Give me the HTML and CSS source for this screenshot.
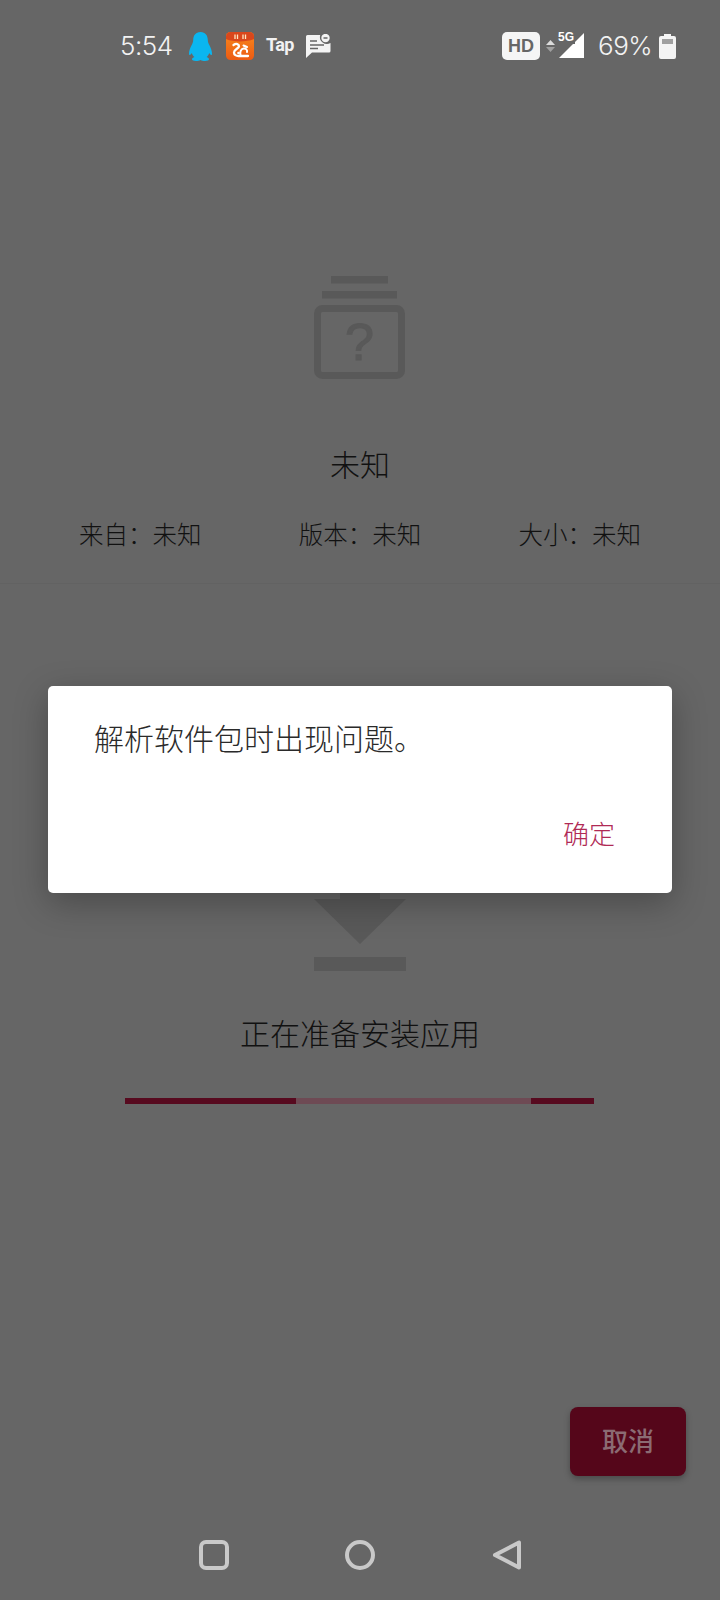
FILE: index.html
```html
<!DOCTYPE html>
<html lang="zh-CN">
<head>
<meta charset="utf-8">
<title>安装应用</title>
<link rel="stylesheet" href="styles.css">
</head>
<body>
<div class="screen">
  <header class="statusbar">
    <div class="status-left">
      <span class="clock">5:54</span>
      <svg class="ic-qq" viewBox="0 0 25 29" width="25" height="29"><path fill="#0ab6f0" d="M12.500 0C7.400 0 5.300 3.800 5.200 8c0 1.900-.6 3.400-1.500 5C2.300 15.600 1 18.800 1 21.800c0 1.100.5 1.500 1.300 1 .6-.4 1.100-1 1.500-1.700.5 1.700 1.400 3 2.600 4-1.400.5-2.400 1.200-2.400 2.200 0 1.200 1.500 1.700 4 1.700 1.900 0 3.300-.4 4.500-1 1.200.6 2.600 1 4.500 1 2.500 0 4-.5 4-1.700 0-1-1-1.700-2.400-2.200 1.200-1 2.100-2.300 2.600-4 .4.700.9 1.300 1.500 1.700.8.500 1.300.1 1.300-1 0-3-1.300-6.200-2.700-8.800-.9-1.600-1.500-3.100-1.500-5C19.700 3.800 17.600 0 12.500 0z"/></svg>
      <svg class="ic-uc" viewBox="0 0 28 28" width="28" height="28">
        <defs><linearGradient id="ucg" x1="0" y1="0" x2="0" y2="1"><stop offset="0" stop-color="#f88a1e"/><stop offset="1" stop-color="#ec5a12"/></linearGradient></defs>
        <rect width="28" height="28" rx="4.500" fill="url(#ucg)"/>
        <path fill="#d9471c" d="M4.500 0h19A4.500 4.500 0 0 1 28 4.500V7c-4 1.800-9 2.400-14 2.400S4 8.800 0 7V4.500A4.500 4.500 0 0 1 4.500 0z"/>
        <path stroke="#ffe6c0" stroke-width="1.300" d="M9 2.500v4.500M11.500 2.500v4.500M17 2.500v4.500M19.500 2.500v4.500"/>
        <path fill="none" stroke="#fff" stroke-width="2.300" stroke-linecap="round" d="M7.500 13c2.800-2 5.500-1 5.500 1.200 0 2.300-5 3-5 6.300 0 2.300 2.300 3.500 4.500 3.500h9.500"/>
        <path fill="none" stroke="#fff" stroke-width="2" stroke-linecap="round" d="M14.500 23c-.8-3 .3-6 3-6.500 2.500-.4 4 1.500 3.500 3.500M17.500 13.500l3.500 1.500"/>
        <circle cx="12.500" cy="21" r="1.300" fill="#fff"/>
      </svg>
      <span class="tap">Tap</span>
      <svg class="ic-msg" viewBox="0 0 25 24" width="25" height="24">
        <path fill="#f4f4f4" d="M1.500 1h12.700a7 7 0 0 0 10.300 8V17a1.500 1.500 0 0 1-1.500 1.500H6L0 24V2.500A1.500 1.500 0 0 1 1.500 1z"/>
        <circle cx="19.500" cy="4" r="4.200" fill="#f4f4f4"/>
        <path stroke="#666" stroke-width="1.500" d="M17.500 4h4M4 7h7M4 11h14M4 14.500h8"/>
      </svg>
    </div>
    <div class="status-right">
      <span class="hd">HD</span>
      <svg class="ic-updown" viewBox="0 0 9 13" width="9" height="13"><path fill="#dcdcdc" d="M4.500 0 9 5H0z"/><path fill="#a0a0a0" d="M0 7h9l-4.500 5z"/></svg>
      <span class="signal">
        <svg viewBox="0 0 25 25" width="25" height="25"><path fill="#fff" d="M25 0v25H0z"/></svg>
        <span class="five-g">5G</span>
      </span>
      <span class="percent">69%</span>
      <svg class="ic-batt" viewBox="0 0 17 25" width="17" height="25"><path fill="#f4f4f4" d="M5 0h7v2h3a2 2 0 0 1 2 2v19a2 2 0 0 1-2 2H2a2 2 0 0 1-2-2V4a2 2 0 0 1 2-2h3z"/><rect x="3" y="5" width="11" height="5" fill="#a0a0a0"/></svg>
    </div>
  </header>

  <section class="app-info">
    <svg class="ic-unknown" viewBox="0 0 92 103" width="92" height="103">
      <rect x="17" y="0" width="57" height="7.500" fill="#595959"/>
      <rect x="8" y="15" width="75" height="7.500" fill="#595959"/>
      <rect x="3.500" y="32.500" width="84" height="67" rx="5" fill="none" stroke="#595959" stroke-width="7"/>
      <text class="qmark" x="45.500" y="84" text-anchor="middle">?</text>
    </svg>
    <h1 class="app-name">未知</h1>
    <div class="meta">
      <span>来自&#xFF1A;未知</span>
      <span>版本&#xFF1A;未知</span>
      <span>大小&#xFF1A;未知</span>
    </div>
  </section>

  <section class="progress-area">
    <svg class="ic-download" viewBox="0 0 92 92" width="92" height="92">
      <path fill="#595959" d="M26 0h40v20h26L46 65 0 20h26z"/>
      <rect x="0" y="78" width="92" height="14" fill="#595959"/>
    </svg>
    <p class="progress-label">正在准备安装应用</p>
    <div class="bar">
      <div class="bar-fill bar-a"></div>
      <div class="bar-gap"></div>
      <div class="bar-fill bar-b"></div>
    </div>
  </section>

  <div class="actions"><button class="cancel">取消</button></div>

  <nav class="navbar">
    <svg viewBox="0 0 30 30" width="30" height="30"><rect x="2" y="2" width="26" height="26" rx="5" fill="none" stroke="#c9c9c9" stroke-width="4"/></svg>
    <svg viewBox="0 0 30 30" width="30" height="30"><circle cx="15" cy="15" r="13" fill="none" stroke="#c9c9c9" stroke-width="4"/></svg>
    <svg viewBox="0 0 30 30" width="30" height="30"><path d="M28 2.500v25L4 15z" fill="none" stroke="#c9c9c9" stroke-width="4" stroke-linejoin="round"/></svg>
  </nav>

  <div class="dialog" role="dialog">
    <p class="dialog-msg">解析软件包时出现问题。</p>
    <div class="dialog-actions"><button class="dialog-ok">确定</button></div>
  </div>
</div>
</body>
</html>
```
FILE: styles.css
```css
* { box-sizing: border-box; }
html, body { margin: 0; padding: 0; }
body { font-family: "Noto Sans CJK SC", "Noto Sans", sans-serif; }
.screen {
  position: relative;
  width: 720px;
  height: 1600px;
  background: #666666;
  display: flex;
  flex-direction: column;
  overflow: hidden;
}
.statusbar {
  height: 92px;
  flex: none;
  display: flex;
  justify-content: space-between;
  align-items: center;
  padding: 0 44px 0 120px;
  color: #f2f2f2;
}
.status-left, .status-right { display: flex; align-items: center; }
.clock, .percent {
  font-family: Inter, Roboto, "Liberation Sans", sans-serif;
  font-weight: 300;
  font-size: 26px;
  line-height: 32px;
  letter-spacing: -0.5px;
  white-space: nowrap;
}
.clock { width: 52px; }
.ic-qq { margin-left: 16px; }
.ic-uc { margin-left: 13px; }
.tap {
  margin-left: 12px;
  margin-top: -3px;
  width: 28px;
  font-family: Roboto, "Liberation Sans", sans-serif;
  font-weight: 700;
  font-size: 18px;
  letter-spacing: -0.6px;
  white-space: nowrap;
}
.ic-msg { margin-left: 12px; }
.hd {
  width: 38px;
  height: 28px;
  border-radius: 5px;
  background: #f5f5f5;
  color: #666;
  font-family: "Liberation Sans", sans-serif;
  font-weight: 700;
  font-size: 18px;
  line-height: 28px;
  text-align: center;
}
.ic-updown { margin-left: 6px; }
.signal { position: relative; width: 25px; height: 25px; margin-left: 4px; margin-top: -1px; display: block; }
.signal svg { display: block; }
.five-g {
  position: absolute;
  left: -1px;
  top: -3px;
  font-family: "Liberation Sans", sans-serif;
  font-weight: 700;
  font-size: 12px;
  line-height: 14px;
  color: #fff;
  background: #666;
  padding-right: 1px;
}
.percent { margin-left: 14px; width: 54px; }
.ic-batt { margin-left: 7px; }

.app-info {
  flex: none;
  height: 492px;
  padding-top: 184px;
  display: flex;
  flex-direction: column;
  align-items: center;
  border-bottom: 1px solid #626262;
}
.ic-unknown { display: block; }
.qmark {
  font-family: "Liberation Sans", sans-serif;
  font-weight: 400;
  font-size: 52px;
  fill: #595959;
  stroke: #595959;
  stroke-width: 1.200px;
}
.app-name {
  margin: 64px 0 0;
  font-size: 30px;
  line-height: 40px;
  font-weight: 300;
  color: #111;
}
.meta {
  margin-top: 31px;
  width: 100%;
  padding: 0 79px;
  display: flex;
  justify-content: space-between;
  font-size: 24.500px;
  font-weight: 300;
  line-height: 40px;
  color: #111;
}

.progress-area {
  flex: none;
  padding-top: 295px;
  display: flex;
  flex-direction: column;
  align-items: center;
}
.ic-download { display: block; }
.progress-label {
  margin: 41px 0 0;
  font-size: 30px;
  font-weight: 300;
  line-height: 40px;
  color: #111;
}
.bar {
  margin-top: 46px;
  align-self: flex-start;
  margin-left: 125px;
  width: 469px;
  height: 6px;
  display: flex;
  background: #6e4a54;
}
.bar-fill { background: #570a1f; }
.bar-a { width: 171px; }
.bar-gap { flex: 1; }
.bar-b { width: 63px; }

.actions {
  flex: none;
  margin-top: 303px;
  padding-right: 34px;
  display: flex;
  justify-content: flex-end;
}
.cancel {
  width: 116px;
  height: 69px;
  padding: 0 0 5px;
  border: 0;
  border-radius: 8px;
  background: #55061a;
  color: #8b6b73;
  font-family: inherit;
  font-size: 26px;
  font-weight: 500;
  box-shadow: 0 3px 6px rgba(0, 0, 0, 0.28);
}
.navbar {
  flex: none;
  margin-top: 64px;
  display: flex;
  justify-content: center;
  gap: 116px;
}

.dialog {
  position: absolute;
  left: 48px;
  top: 686px;
  width: 624px;
  height: 207px;
  background: #fff;
  border-radius: 5px;
  box-shadow: 0 10px 34px rgba(0, 0, 0, 0.28);
  padding: 31px 0 0 46px;
}
.dialog-msg {
  margin: 0;
  font-size: 30px;
  font-weight: 300;
  line-height: 40px;
  color: #2a2a2a;
}
.dialog-actions {
  margin-top: 56px;
  padding-right: 57px;
  display: flex;
  justify-content: flex-end;
}
.dialog-ok {
  padding: 0;
  border: 0;
  background: none;
  font-family: inherit;
  font-size: 26px;
  font-weight: 300;
  line-height: 40px;
  color: #b02a55;
}
```
